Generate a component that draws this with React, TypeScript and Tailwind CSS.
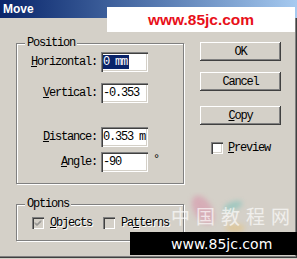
const mono = "font-['Liberation_Mono','Courier_New',monospace] text-[12px] tracking-[-1.2px] leading-[12px] text-black"

function Sunken({ children, className = '' }: { children?: React.ReactNode; className?: string }) {
  return (
    <div
      className={`bg-white shadow-[inset_1px_1px_0_#808080,inset_2px_2px_0_#404040,inset_-1px_-1px_0_#fff,inset_-2px_-2px_0_#d4d0c8] ${className}`}
    >
      {children}
    </div>
  )
}

function Field({ u, rest, value, mt, suffix }: { u: string; rest: string; value: React.ReactNode; mt: string; suffix?: string }) {
  return (
    <div className={`flex items-center h-[20px] ${mt}`}>
      <div className={`w-[80px] text-right ${mono}`}>
        <span className="underline underline-offset-1">{u}</span>
        {rest}
      </div>
      <Sunken className="ml-[4px] w-[47px] h-[20px] flex items-center pl-[2px] overflow-hidden">
        <span className={`${mono} whitespace-nowrap`}>{value}</span>
      </Sunken>
      {suffix && <span className={`${mono} ml-[5px] -mt-[4px]`}>{suffix}</span>}
    </div>
  )
}

function Button({ children, mt }: { children: React.ReactNode; mt: string }) {
  return (
    <div
      className={`w-[81px] h-[19px] flex items-center justify-center bg-[#d4d0c8] shadow-[inset_-1px_-1px_0_#404040,inset_1px_1px_0_#fff,inset_-2px_-2px_0_#808080] ${mt} ${mono}`}
    >
      {children}
    </div>
  )
}

function Check({ checked, disabled }: { checked?: boolean; disabled?: boolean }) {
  return (
    <div
      className={`w-[12px] h-[12px] shrink-0 flex items-center justify-center shadow-[inset_1px_1px_0_#808080,inset_2px_2px_0_#404040,inset_-1px_-1px_0_#fff,inset_-2px_-2px_0_#d4d0c8] ${disabled ? 'bg-[#d4d0c8]' : 'bg-white'}`}
    >
      {checked && (
        <svg width="8" height="8" viewBox="0 0 8 8">
          <path d="M1 3.5 L3 5.5 L7 1.5 M1 4.5 L3 6.5 L7 2.5" stroke={disabled ? '#808080' : '#000'} strokeWidth="1" fill="none" />
        </svg>
      )}
    </div>
  )
}

const groupBox =
  'border border-[#808080] shadow-[inset_1px_1px_0_#fff,1px_1px_0_#fff] px-0 pb-0 m-0 min-w-0'
const legend = `ml-[8px] px-[2px] bg-[#d4d0c8] ${mono}`

export default function App() {
  return (
    <div className="relative w-[297px] h-[259px] overflow-hidden bg-[#d4d0c8]">
      <div className="w-[297px] h-[258px] flex flex-col shadow-[inset_-1px_-1px_0_#404040,inset_-2px_-2px_0_#808080]">
        <div className="h-[18px] shrink-0 flex items-center pl-[3px] bg-gradient-to-r from-[#0a246a] to-[#a6caf0]">
          <span className="font-['Liberation_Sans',Arial,sans-serif] font-bold text-[12px] text-white leading-none">Move</span>
        </div>

        <div className="flex">
          <div className="ml-[16px] w-[168px] pt-[19px]">
            <fieldset className={`${groupBox} h-[147px]`}>
              <legend className={legend}>Position</legend>
              <div className="flex flex-col">
                <Field
                  mt="mt-[3px]"
                  u="H"
                  rest="orizontal:"
                  value={<span className="bg-[#0a246a] text-white pr-[2px]">0 mm</span>}
                />
                <Field mt="mt-[11px]" u="V" rest="ertical:" value="-0.353" />
                <Field mt="mt-[24px]" u="D" rest="istance:" value="0.353 m" />
                <Field mt="mt-[5px]" u="A" rest="ngle:" value="-90" suffix="°" />
              </div>
            </fieldset>

            <fieldset className={`${groupBox} h-[43px] mt-[14px]`}>
              <legend className={legend}>Options</legend>
              <div className="flex items-center mt-[7px] ml-[15px]">
                <Check checked disabled />
                <span className={`ml-[6px] ${mono} text-[#808080] [text-shadow:1px_1px_0_#fff]`}>
                  <span className="underline underline-offset-1">O</span>bjects
                </span>
                <div className="ml-[11px]">
                  <Check disabled />
                </div>
                <span className={`ml-[6px] ${mono} text-[#808080] [text-shadow:1px_1px_0_#fff]`}>
                  Pa<span className="underline underline-offset-1">t</span>terns
                </span>
              </div>
            </fieldset>
          </div>

          <div className="ml-[16px] pt-[24px] flex flex-col">
            <Button mt="">OK</Button>
            <Button mt="mt-[11px]">Cancel</Button>
            <Button mt="mt-[15px]">
              <span className="underline underline-offset-1">C</span>opy
            </Button>
            <div className="flex items-center mt-[17px] ml-[11px]">
              <Check />
              <span className={`ml-[5px] ${mono}`}>
                <span className="underline underline-offset-1">P</span>review
              </span>
            </div>
          </div>
        </div>
      </div>

      {/* watermark overlays */}
      <div className="absolute left-[107px] top-[7px] w-[188px] h-[25px] bg-white flex items-center justify-center">
        <span className="font-['Liberation_Sans',Arial,sans-serif] font-bold text-[15.5px] text-[#e8101a] leading-none">www.85jc.com</span>
      </div>

      <svg className="absolute left-[185px] top-[192px]" width="70" height="44" viewBox="0 0 70 44">
        <defs>
          <filter id="b" x="-50%" y="-50%" width="200%" height="200%">
            <feGaussianBlur stdDeviation="2.5" />
          </filter>
        </defs>
        <g filter="url(#b)" opacity="0.5">
          <ellipse cx="18" cy="18" rx="9" ry="16" fill="#d98aa6" transform="rotate(-30 18 18)" />
          <ellipse cx="48" cy="14" rx="10" ry="4" fill="#6cc0b8" transform="rotate(-20 48 14)" />
          <ellipse cx="50" cy="36" rx="10" ry="4" fill="#e8c070" />
        </g>
      </svg>

      <div className="absolute left-[171px] top-[205px] font-['Noto_Sans_CJK_SC',sans-serif] text-[19px] leading-[22px] tracking-[6px] text-white/65 whitespace-nowrap">
        中国教程网
      </div>

      <div className="absolute left-[130px] top-[232px] w-[167px] h-[23px] bg-black flex items-center pl-[41px]">
        <span className="font-['DejaVu_Sans',Verdana,sans-serif] text-[14px] text-white leading-none">www.85jc.com</span>
      </div>
    </div>
  )
}
